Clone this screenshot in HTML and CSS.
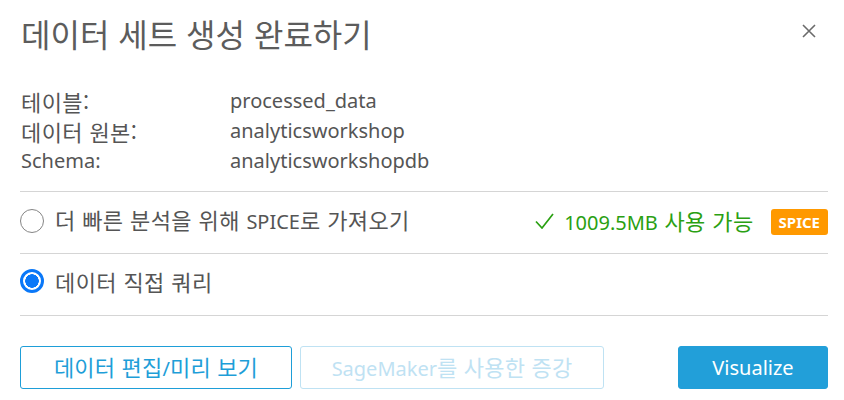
FILE: index.html
```html
<!DOCTYPE html>
<html lang="ko">
<head>
<meta charset="utf-8">
<link rel="stylesheet" href="styles.css">
</head>
<body>
<div class="dialog">
  <div class="header">
    <h1 class="title">데이터 세트 생성 완료하기</h1>
    <button class="close" aria-label="닫기">
      <svg width="14" height="14" viewBox="0 0 14 14"><path d="M1 1L13 13M13 1L1 13" stroke="#6b6b6b" stroke-width="1.6" fill="none"/></svg>
    </button>
  </div>
  <div class="info">
    <div class="label ko">테이블:</div><div class="value">processed_data</div>
    <div class="label ko">데이터 원본:</div><div class="value">analyticsworkshop</div>
    <div class="label">Schema:</div><div class="value">analyticsworkshopdb</div>
  </div>
  <div class="option first">
    <label class="radio"><span class="dot"></span><span class="text"><span class="ko">더 빠른 분석을 위해 </span>SPICE<span class="ko">로 가져오기</span></span></label>
    <div class="avail">
      <svg class="check" width="19" height="16" viewBox="0 0 19 16"><path d="M1 8.5L7 15L18 1" stroke="#2aa012" stroke-width="1.7" fill="none"/></svg>
      <span>1009.5MB<span class="ko"> 사용 가능</span></span>
      <span class="badge">SPICE</span>
    </div>
  </div>
  <div class="option second">
    <label class="radio"><span class="dot on"></span><span class="text ko">데이터 직접 쿼리</span></label>
  </div>
  <div class="actions">
    <button class="btn outline"><span class="ko">데이터 편집</span>/<span class="ko">미리 보기</span></button>
    <button class="btn disabled">SageMaker<span class="ko">를 사용한 증강</span></button>
    <button class="btn primary">Visualize</button>
  </div>
</div>
</body>
</html>
```
FILE: styles.css
```css
* { box-sizing: border-box; }
html, body { margin: 0; padding: 0; background: #fff; }
body {
  font-family: "Noto Sans", "Noto Sans CJK KR", sans-serif;
  color: #555;
}
.ko {
  font-family: "Noto Sans CJK KR", sans-serif;
  font-size: 22px;
  letter-spacing: 0.4px;
}
.dialog {
  width: 844px;
  height: 400px;
  padding: 0 16px 0 20px;
}
.header {
  display: flex;
  align-items: center;
  justify-content: space-between;
  height: 66px;
}
.title {
  margin: 0;
  font-family: "Noto Sans CJK KR", sans-serif;
  font-weight: 400;
  font-size: 32px;
  line-height: 40px;
  color: #5c5c5c;
  padding-left: 1px;
}
.close {
  border: 0;
  background: none;
  padding: 0;
  margin: 0 12px 4px 0;
  width: 14px;
  height: 14px;
  display: flex;
}
.info {
  display: grid;
  grid-template-columns: 209px 1fr;
  padding-top: 20px;
  padding-bottom: 15px;
  font-size: 20px;
  line-height: 30px;
  border-bottom: 1px solid #d5d5d5;
}
.label, .value { padding-left: 1px; height: 30px; }
.option {
  display: flex;
  align-items: center;
  justify-content: space-between;
  border-bottom: 1px solid #d5d5d5;
  font-size: 20px;
  line-height: 30px;
}
.option.first { height: 62px; padding-bottom: 4px; }
.option.second { height: 62px; padding-bottom: 8px; }
.radio {
  display: flex;
  align-items: center;
  gap: 11px;
}
.dot {
  width: 24px;
  height: 24px;
  border: 1.5px solid #858585;
  border-radius: 50%;
  flex: none;
}
.dot.on {
  border: 3px solid #0a78f8;
  background: radial-gradient(circle, #0a78f8 0 6.5px, #fff 7px);
}
.avail {
  display: flex;
  align-items: center;
  color: #2aa012;
  padding-top: 2px;
}
.check { margin-right: 10px; margin-left: -3px; margin-top: -2px; }
.badge {
  margin-left: 17px;
  background: #ff9900;
  color: #fff;
  font-size: 15px;
  font-weight: 700;
  padding: 0 8px;
  height: 26px;
  line-height: 26px;
  border-radius: 3px;
}
.actions {
  display: flex;
  align-items: center;
  padding-top: 30px;
}
.btn {
  height: 43px;
  font-family: "Noto Sans", "Noto Sans CJK KR", sans-serif;
  font-size: 20px;
  line-height: 30px;
  border-radius: 3px;
  background: #fff;
  padding: 0;
}
.btn .ko { font-size: 22px; letter-spacing: 0.2px; }
.btn.outline {
  width: 272px;
  border: 1.5px solid #1e9ed8;
  color: #1e9ed8;
}
.btn.disabled {
  width: 304px;
  margin-left: 8px;
  border: 1.5px solid #bfe2f3;
  color: #bfe2f3;
}
.btn.primary {
  width: 150px;
  margin-left: auto;
  border: 1px solid #229fd9;
  background: #229fd9;
  color: #fff;
}
```
